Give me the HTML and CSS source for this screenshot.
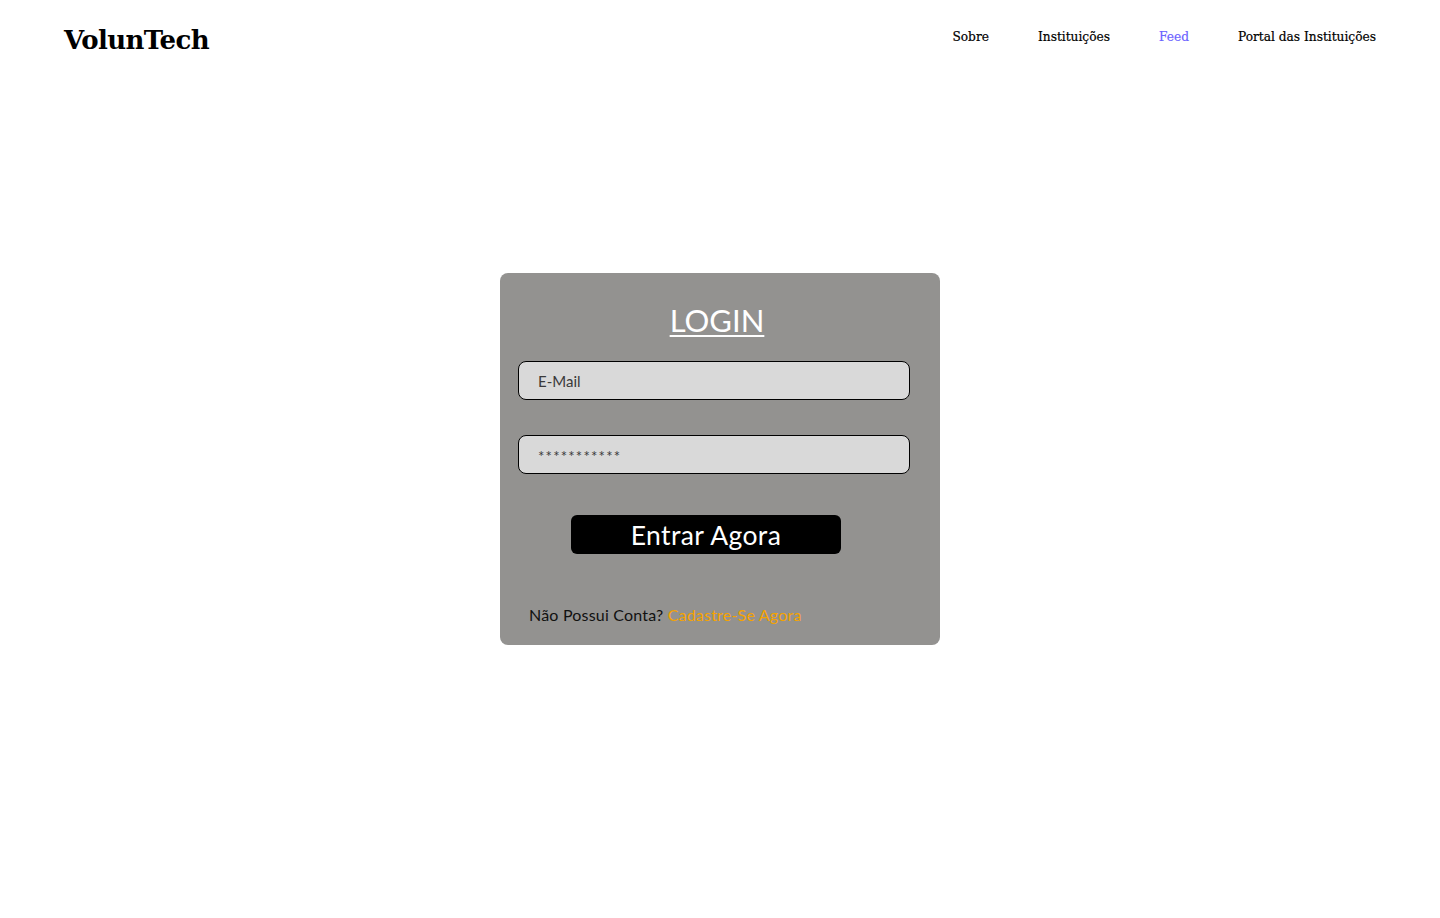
FILE: index.html
```html
<!DOCTYPE html>
<html lang="pt">
<head>
<meta charset="utf-8">
<title>VolunTech - Login</title>
<link rel="stylesheet" href="styles.css">
</head>
<body>
<header class="topbar">
  <div class="logo">VolunTech</div>
  <nav class="nav">
    <a href="#" class="nav-link">Sobre</a>
    <a href="#" class="nav-link">Instituições</a>
    <a href="#" class="nav-link nav-active">Feed</a>
    <a href="#" class="nav-link">Portal das Instituições</a>
  </nav>
</header>
<main class="main">
  <form class="card">
    <h1 class="title">LOGIN</h1>
    <input class="field" type="text" placeholder="E-Mail">
    <input class="field field-pass" type="text" placeholder="***********">
    <button class="btn" type="button">Entrar Agora</button>
    <p class="signup">Não Possui Conta? <a href="#" class="signup-link">Cadastre-Se Agora</a></p>
  </form>
</main>
</body>
</html>
```
FILE: styles.css
```css
* { box-sizing: border-box; }
html, body { margin: 0; padding: 0; background: #fff; }
body { font-family: "Lato", "Open Sans", sans-serif; color: #000; }

.topbar {
  display: flex;
  justify-content: space-between;
  align-items: center;
  height: 78px;
  padding: 0 64px;
}
.logo {
  font-family: "DejaVu Serif", serif;
  font-weight: bold;
  font-size: 26px;
  letter-spacing: -0.6px;
  color: #000;
  margin-top: 2px;
}
.nav { display: flex; gap: 49px; margin-top: -4px; }
.nav-link {
  font-family: "DejaVu Serif", serif;
  font-size: 12.2px;
  color: #000;
  text-decoration: none;
  -webkit-text-stroke: 0.2px currentColor;
}
.nav-active { color: #6b63ff; }

.main {
  display: flex;
  justify-content: center;
  padding-top: 195px;
}
.card {
  width: 440px;
  height: 372px;
  background: #939290;
  border-radius: 8px;
  padding: 26px 30px 0 18px;
  display: flex;
  flex-direction: column;
}
.title {
  margin: 0 0 20px 0;
  text-align: center;
  font-weight: 400;
  font-size: 31px;
  line-height: 42px;
  color: #fff;
  text-decoration: underline;
  text-decoration-thickness: 2px;
  text-underline-offset: 3px;
  padding-left: 6px;
}
.field {
  width: 392px;
  height: 39px;
  background: #d9d9d9;
  border: 1px solid #000;
  border-radius: 8px;
  padding: 0 19px;
  font-family: inherit;
  font-size: 15px;
  color: #333;
}
.field::placeholder { color: #3a3a3a; }
.field-pass { margin-top: 35px; padding-top: 3px; }
.field-pass::placeholder { letter-spacing: 1.2px; }
.btn {
  margin: 41px 0 0 53px;
  width: 270px;
  height: 39px;
  background: #000;
  color: #fff;
  border: none;
  border-radius: 6px;
  font-family: inherit;
  font-size: 26.5px;
  letter-spacing: 0.4px;
  padding: 0;
}
.signup {
  margin: 51px 0 0 11px;
  font-size: 16px;
  letter-spacing: 0.2px;
  color: #111;
}
.signup-link { color: #f5a300; text-decoration: none; }
```
